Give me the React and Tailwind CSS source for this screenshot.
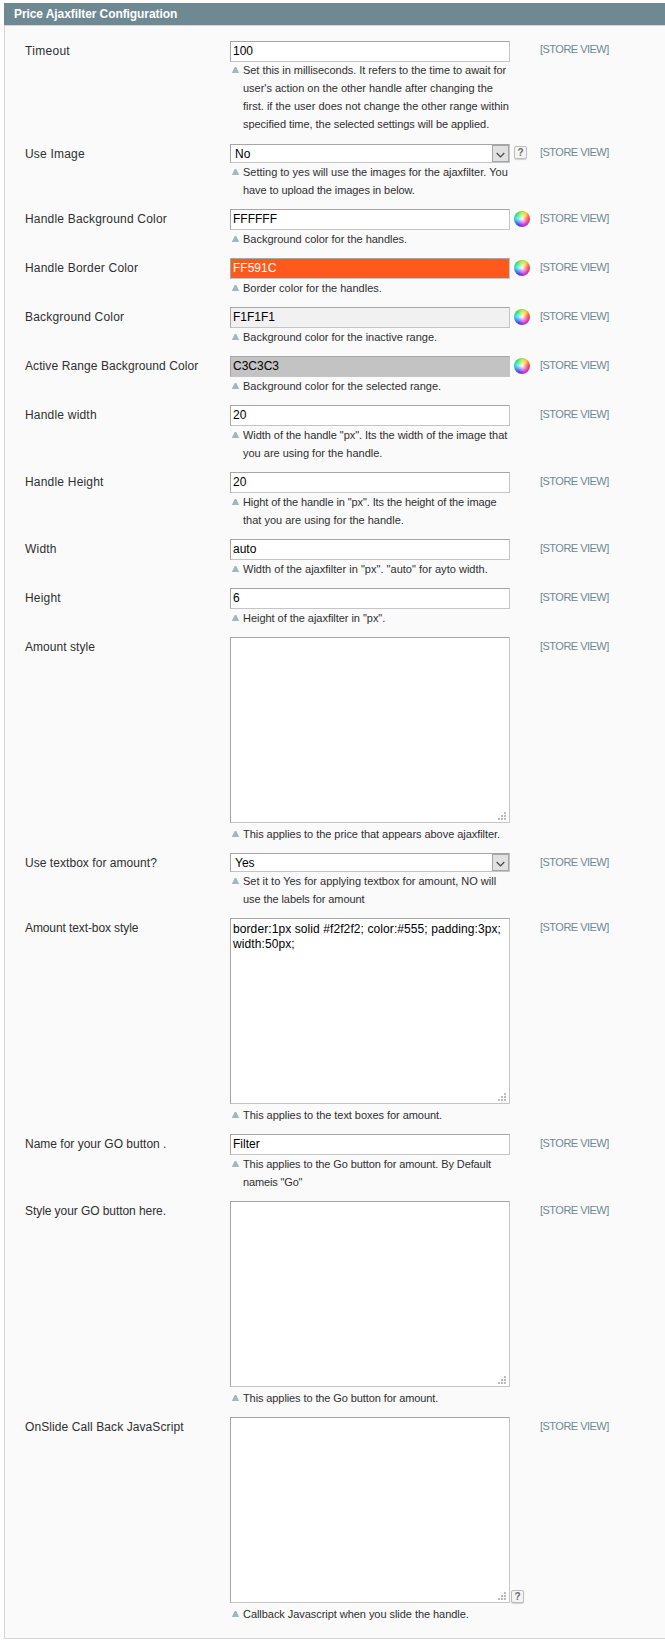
import React from "react";

const rows = [
  {
    label: "Timeout",
    labelTrack: "tracking-[0.3px]",
    value: "100",
    lift: true,
    note: [
      ["Set this in milliseconds. It refers to the time to await for", "tracking-[-0.045px]"],
      ["user's action on the other handle after changing the", "tracking-[-0.01px]"],
      ["first. if the user does not change the other range within", "tracking-[0.01px]"],
      ["specified time, the selected settings will be applied.", "tracking-[-0.05px]"],
    ],
  },
  {
    label: "Use Image",
    labelTrack: "tracking-[0.2px]",
    kind: "select",
    value: "No",
    help: true,
    note: [["Setting to yes will use the images for the ajaxfilter. You"], ["have to upload the images in below.", "tracking-[-0.09px]"]],
  },
  { label: "Handle Background Color", labelTrack: "tracking-[0.2px]", value: "FFFFFF", wheel: true, note: [["Background color for the handles.", "tracking-[-0.01px]"]] },
  { label: "Handle Border Color", labelTrack: "tracking-[0.2px]", value: "FF591C", wheel: true, tone: "bg-[#ff591c] text-white", note: [["Border color for the handles."]] },
  { label: "Background Color", labelTrack: "tracking-[0.2px]", value: "F1F1F1", wheel: true, tone: "bg-[#f1f1f1] text-black", note: [["Background color for the inactive range.", "tracking-[-0.01px]"]] },
  { label: "Active Range Background Color", labelTrack: "tracking-[0.09px]", value: "C3C3C3", wheel: true, tone: "bg-[#c3c3c3] text-black", note: [["Background color for the selected range."]] },
  {
    label: "Handle width",
    labelTrack: "tracking-[0.2px]",
    value: "20",
    note: [['Width of the handle "px". Its the width of the image that', "tracking-[-0.05px]"], ["you are using for the handle."]],
  },
  {
    label: "Handle Height",
    labelTrack: "tracking-[0.2px]",
    value: "20",
    note: [['Hight of the handle in "px". Its the height of the image', "tracking-[-0.1px]"], ["that you are using for the handle."]],
  },
  { label: "Width", labelTrack: "tracking-[0.2px]", value: "auto", note: [['Width of the ajaxfilter in "px". "auto" for ayto width.', "tracking-[0.02px]"]] },
  { label: "Height", labelTrack: "tracking-[0.2px]", value: "6", note: [['Height of the ajaxfilter in "px".', "tracking-[-0.04px]"]] },
  { label: "Amount style", labelTrack: "tracking-[0.04px]", kind: "area", lines: [], note: [["This applies to the price that appears above ajaxfilter.", "tracking-[-0.05px]"]] },
  {
    label: "Use textbox for amount?",
    labelTrack: "tracking-[0.05px]",
    kind: "select",
    value: "Yes",
    note: [["Set it to Yes for applying textbox for amount, NO will"], ["use the labels for amount", "tracking-[-0.08px]"]],
  },
  {
    label: "Amount text-box style",
    labelTrack: "tracking-[-0.1px]",
    kind: "area",
    lines: ["border:1px solid #f2f2f2; color:#555; padding:3px;", "width:50px;"],
    note: [["This applies to the text boxes for amount.", "tracking-[-0.05px]"]],
  },
  {
    label: "Name for your GO button .",
    labelTrack: "tracking-[0px]",
    value: "Filter",
    note: [["This applies to the Go button for amount. By Default", "tracking-[-0.1px]"], ['nameis "Go"', "tracking-[-0.15px]"]],
  },
  { label: "Style your GO button here.", labelTrack: "tracking-[-0.07px]", kind: "area", lines: [], note: [["This applies to the Go button for amount.", "tracking-[-0.1px]"]] },
  {
    label: "OnSlide Call Back JavaScript",
    labelTrack: "tracking-[0.09px]",
    kind: "area",
    lines: [],
    help: true,
    note: [["Callback Javascript when you slide the handle.", "tracking-[-0.05px]"]],
  },
];

const frame = "w-[280px] shrink-0 border border-t-[#a6a6a6] border-l-[#a6a6a6] border-r-[#c5c5c5] border-b-[#c5c5c5]";

function Help({ area }) {
  return (
    <span
      className={`${area ? "" : "mt-[2px]"} flex h-[13px] w-[13px] items-center justify-center rounded-[2px] border border-[#bdbdbd] bg-[#f4f4f4] text-[10px] leading-[11px] font-bold text-[#6b6b6b] shadow-[0_1px_1px_#d0d0d0]`}
    >
      ?
    </span>
  );
}

function Wheel() {
  return (
    <span className="mt-[2px] h-4 w-4 rounded-full bg-[radial-gradient(circle,#fff_0%,rgba(255,255,255,0.6)_22%,rgba(255,255,255,0)_58%),conic-gradient(#b4f03c,#ffd23c_35deg,#ff4646_85deg,#f032a0_125deg,#c832e6_160deg,#5a3ce0_205deg,#3c82f0_240deg,#28e6f0_272deg,#32e678_315deg,#b4f03c)] shadow-[inset_0_0_1px_#666]" />
  );
}

function Control({ row }) {
  if (row.kind === "select") {
    return (
      <div className={`${frame} flex h-[19px] justify-between bg-white text-xs text-black`}>
        <span className="pl-1 leading-[18px]">{row.value}</span>
        <span className="flex h-[17px] w-[17px] items-center justify-center border border-[#a5a5a5] bg-[#e1e1e1] pt-[2px]">
          <svg width="9" height="6" viewBox="0 0 9 6" fill="none" stroke="#444" strokeWidth="1.2">
            <path d="M0.7 1L4.5 4.8L8.3 1" />
          </svg>
        </span>
      </div>
    );
  }
  if (row.kind === "area") {
    return (
      <div className={`${frame} flex h-[186px] flex-col justify-between bg-white pt-[3px] pr-[3px] pb-[2px] pl-[2px] text-xs leading-[15px] text-black`}>
        <div>
          {row.lines.map((l) => (
            <div key={l} className="tracking-[0.09px] whitespace-nowrap">{l}</div>
          ))}
        </div>
        <svg className="self-end" width="8" height="8" fill="#bdbdbd" shapeRendering="crispEdges">
          <path d="M6 0h2v2h-2zM3 3h2v2h-2zM6 3h2v2h-2zM0 6h2v2h-2zM3 6h2v2h-2zM6 6h2v2h-2z" />
        </svg>
      </div>
    );
  }
  return (
    <div className={`${frame} h-[21px] pl-[2px] text-xs leading-[18px] ${row.tone || "bg-white text-black"}`}>{row.value}</div>
  );
}

function Row({ row, index }) {
  const area = row.kind === "area";
  return (
    <div className="flex items-start pb-[10px]">
      <div className={`w-[205px] shrink-0 pt-px text-xs leading-[18px] whitespace-nowrap text-[#2f2f2f] ${row.labelTrack}`}>{row.label}</div>
      <div className="w-[310px] shrink-0">
        <div className={area ? "flex items-end gap-[1px]" : "flex items-start gap-1"}>
          <Control row={row} />
          {row.help && <Help area={area} />}
          {row.wheel && <Wheel />}
        </div>
        <div className={`flex ${area ? "pt-[2px]" : ""} ${row.lift ? "-mt-px pb-px" : ""}`}>
          <svg className="mt-1.5 mr-[3px] ml-[1px] shrink-0" width="9" height="6" viewBox="0 0 9 6" fill="#a3b7bd">
            <path d="M3.7 0H5.3L8.2 6H0.8Z" />
          </svg>
          <div className="text-[11px] leading-[18px] whitespace-nowrap text-[#2f2f2f]">
            {row.note.map(([text, track]) => (
              <div key={text} className={track}>{text}</div>
            ))}
          </div>
        </div>
      </div>
      <div className={`text-[11px] leading-[17px] tracking-[-0.52px] whitespace-nowrap text-[#6f8992] ${index > 1 ? "pt-px" : ""}`}>[STORE VIEW]</div>
    </div>
  );
}

export default function App() {
  return (
    <div className="h-[1645px] w-[665px] overflow-hidden bg-white pt-[3px] pl-1 font-['Liberation_Sans',Arial,sans-serif]">
      <div className="h-[22px] bg-[#6f8992] pl-[10px] text-xs leading-[22px] font-bold tracking-[-0.08px] text-white">Price Ajaxfilter Configuration</div>
      <div className="h-[1614px] border border-r-0 border-[#d6d6d6] bg-[#fafafa] pt-[15px] pl-5">
        {rows.map((r, i) => (
          <Row key={r.label} row={r} index={i} />
        ))}
      </div>
    </div>
  );
}
